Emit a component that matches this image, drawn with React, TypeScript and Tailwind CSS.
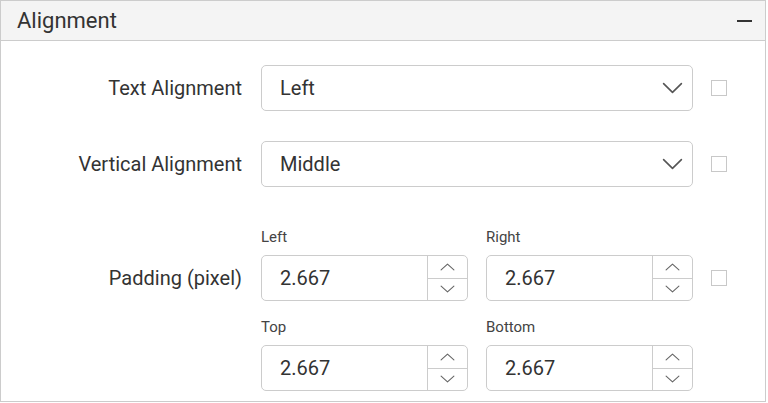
function Checkbox() {
  return <div className="w-[16px] h-[16px] border border-[#c8c8c8] bg-white shrink-0" />;
}

function Chevron({ up, w, h, stroke, className }: { up?: boolean; w: number; h: number; stroke: number; className: string }) {
  const pad = stroke;
  const pts = up
    ? `${pad},${h - pad} ${w / 2},${pad} ${w - pad},${h - pad}`
    : `${pad},${pad} ${w / 2},${h - pad} ${w - pad},${pad}`;
  return (
    <svg width={w} height={h} viewBox={`0 0 ${w} ${h}`} className={className} fill="none">
      <polyline points={pts} stroke="currentColor" strokeWidth={stroke} strokeLinecap="round" strokeLinejoin="round" />
    </svg>
  );
}

function SelectBox({ value }: { value: string }) {
  return (
    <div className="flex items-center justify-between w-[432px] h-[46px] border border-[#cccccc] rounded-[5px] bg-white pl-[18px] pr-[9px]">
      <span className="text-[20px] text-[#333]">{value}</span>
      <Chevron w={21} h={12} stroke={1.6} className="text-[#555]" />
    </div>
  );
}

function SpinBox({ label, value }: { label: string; value: string }) {
  return (
    <div className="flex flex-col">
      <span className="text-[15px] leading-[20px] text-[#444] mb-[8px]">{label}</span>
      <div className="flex w-[207px] h-[46px] border border-[#cccccc] rounded-[5px] bg-white">
        <div className="flex-1 flex items-center pl-[18px] text-[20px] text-[#333]">{value}</div>
        <div className="w-[40px] flex flex-col border-l border-[#cccccc]">
          <div className="flex-1 flex items-center justify-center border-b border-[#cccccc]">
            <Chevron up w={15} h={8} stroke={1.1} className="text-[#666]" />
          </div>
          <div className="flex-1 flex items-center justify-center">
            <Chevron w={15} h={8} stroke={1.1} className="text-[#666]" />
          </div>
        </div>
      </div>
    </div>
  );
}

export default function App() {
  return (
    <div className="w-[766px] h-[402px] border border-[#cccccc] bg-white font-['Roboto',sans-serif]">
      <div className="h-[40px] flex items-center justify-between bg-[#f4f4f4] border-b border-[#cccccc] pl-[16px] pr-[13px]">
        <span className="text-[22px] text-[#333]">Alignment</span>
        <div className="w-[15px] h-[2px] bg-[#333]" />
      </div>

      <div className="pt-[24px]">
        <div className="flex items-center">
          <span className="w-[241px] text-right text-[20px] text-[#333]">Text Alignment</span>
          <div className="ml-[19px]">
            <SelectBox value="Left" />
          </div>
          <div className="ml-[18px]">
            <Checkbox />
          </div>
        </div>

        <div className="flex items-center mt-[30px]">
          <span className="w-[241px] text-right text-[20px] text-[#333]">Vertical Alignment</span>
          <div className="ml-[19px]">
            <SelectBox value="Middle" />
          </div>
          <div className="ml-[18px]">
            <Checkbox />
          </div>
        </div>

        <div className="flex mt-[40px]">
          <div className="w-[241px] flex flex-col">
            <span className="mt-[28px] h-[46px] flex items-center justify-end text-[20px] text-[#333]">Padding (pixel)</span>
          </div>
          <div className="ml-[19px] grid grid-cols-[207px_207px] gap-x-[18px] gap-y-[16px]">
            <SpinBox label="Left" value="2.667" />
            <SpinBox label="Right" value="2.667" />
            <SpinBox label="Top" value="2.667" />
            <SpinBox label="Bottom" value="2.667" />
          </div>
          <div className="ml-[18px] mt-[28px] h-[46px] flex items-center">
            <Checkbox />
          </div>
        </div>
      </div>
    </div>
  );
}
